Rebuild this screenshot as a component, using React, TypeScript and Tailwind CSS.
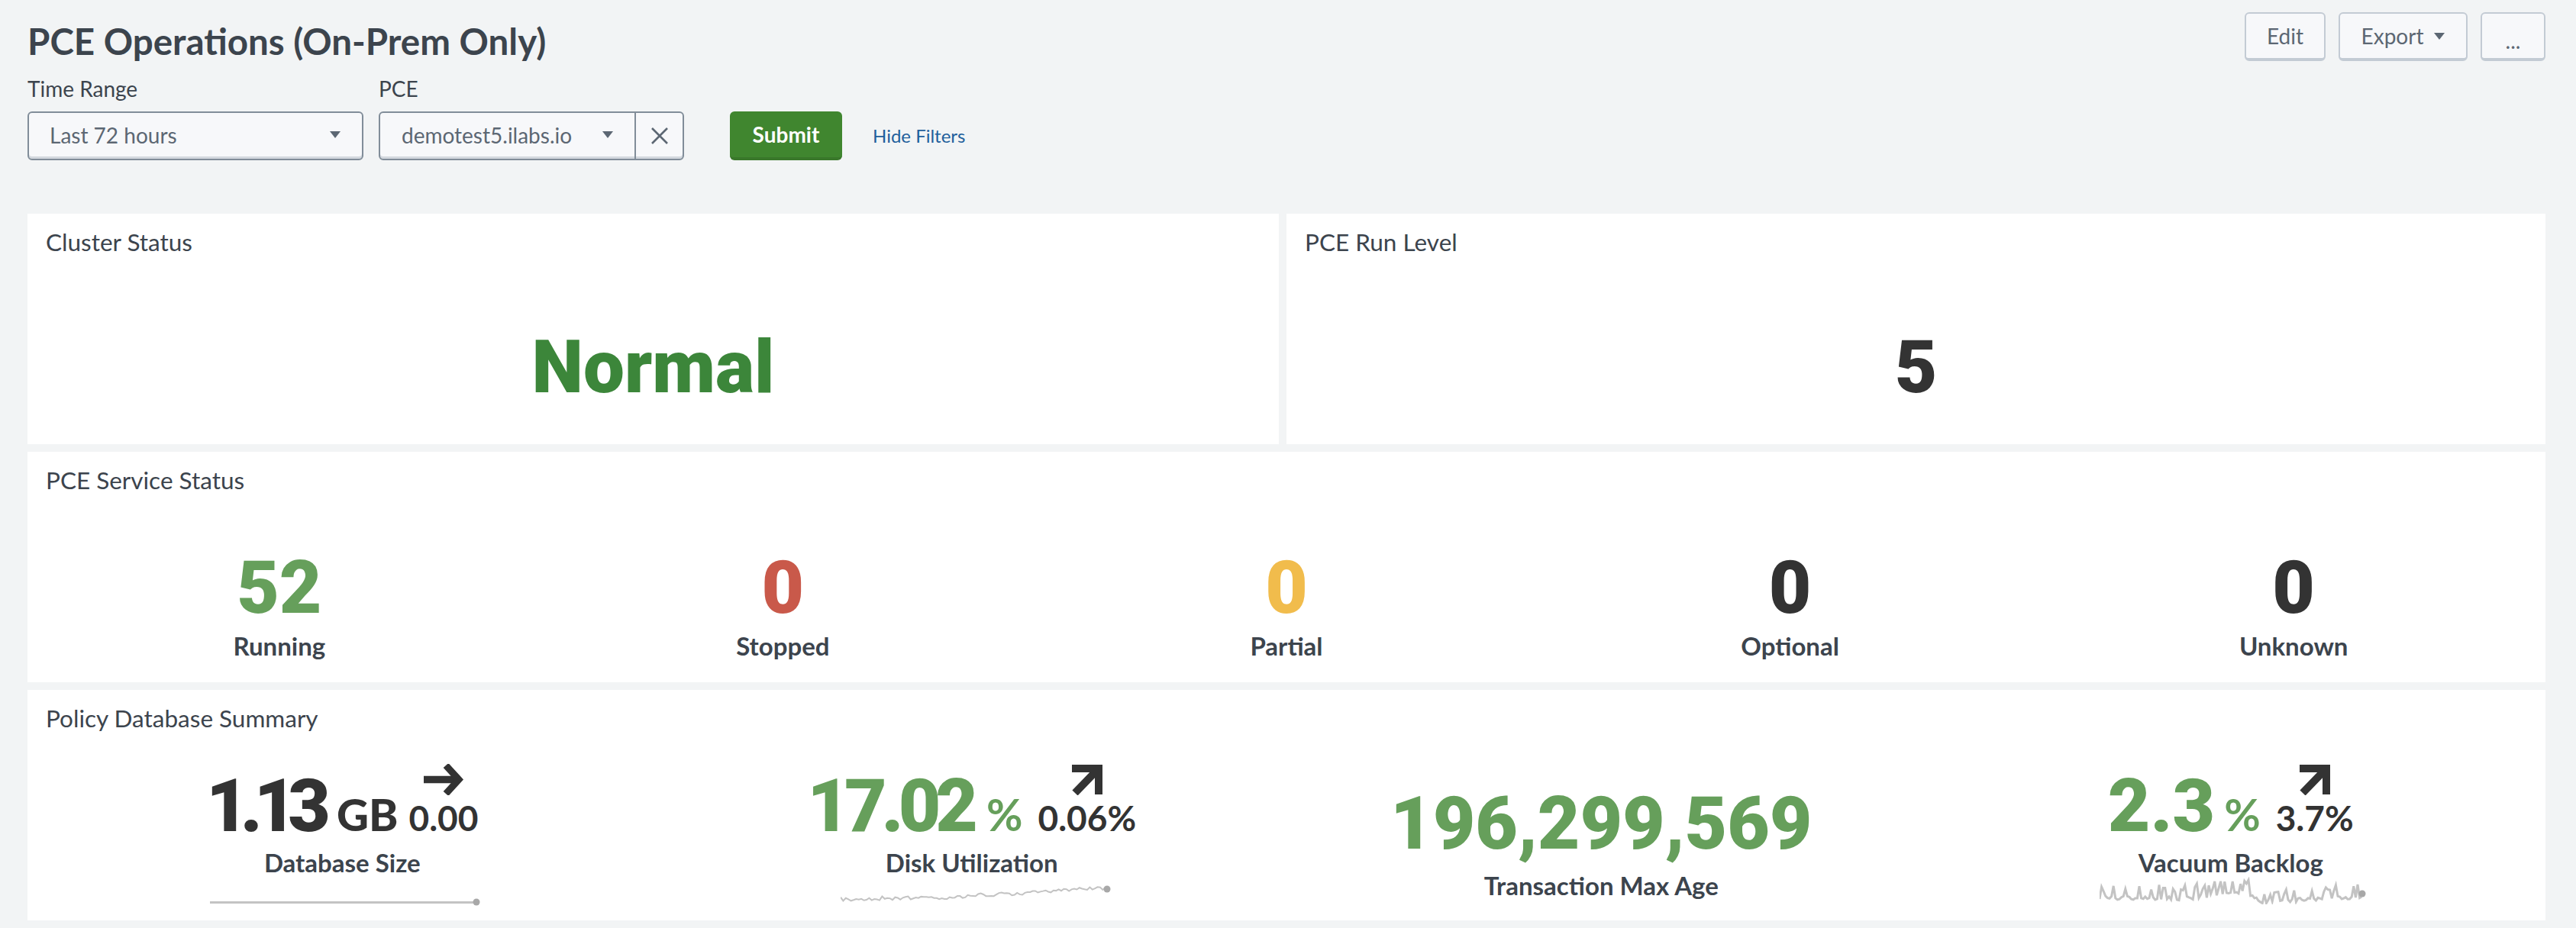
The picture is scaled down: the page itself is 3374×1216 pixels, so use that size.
import React from "react";

function rng(seed: number) {
  let s = seed;
  return () => {
    s = (s * 16807) % 2147483647;
    return (s - 1) / 2147483646;
  };
}

function noisyPath(
  width: number,
  env: (t: number) => number,
  amp: number,
  step: number,
  seed: number,
  spiky: boolean
) {
  const r = rng(seed);
  const pts: string[] = [];
  for (let x = 0; x <= width; x += step) {
    const t = x / width;
    const n = r();
    const d = spiky ? (n > 0.62 ? -amp * (0.5 + r()) : amp * r() * 0.5) : (n - 0.5) * amp;
    pts.push(`${x.toFixed(1)},${(env(t) + d).toFixed(1)}`);
  }
  return "M" + pts.join("L");
}

const diskPath = noisyPath(
  349,
  (t) => (t < 0.4 ? 18 - t * 6 : 15.6 - (t - 0.4) * 20),
  5,
  3.4,
  4242,
  false
);
const vacPath = noisyPath(
  344,
  (t) =>
    t < 0.28
      ? 25
      : t < 0.3
        ? 29
        : t < 0.57
          ? 27 - ((t - 0.3) / 0.27) * 12
          : t < 0.6
            ? 24
            : 30 - ((t - 0.6) / 0.4) * 6,
  10,
  2.6,
  987,
  true
);

const BIG = "font-['Roboto',sans-serif] text-[96px] font-black leading-[96px]";

function Caret() {
  return (
    <svg width="14" height="9" viewBox="0 0 14 9" className="shrink-0">
      <path d="M0 0H14L7 9Z" fill="#5c6773" />
    </svg>
  );
}

function ArrowRight() {
  return (
    <svg width="52" height="41" viewBox="0 0 52 41" className="block mx-auto">
      <path d="M0 20.5H44" stroke="#333" strokeWidth="9.5" fill="none" />
      <path d="M29 2L46 20.5L29 39" stroke="#333" strokeWidth="9" fill="none" strokeMiterlimit="4" />
    </svg>
  );
}

function ArrowUp() {
  return (
    <svg width="42" height="40" viewBox="0 0 42 40" className="block mx-auto">
      <path d="M1 5H36V39" stroke="#333" strokeWidth="10" fill="none" />
      <path d="M35 6L5 37" stroke="#333" strokeWidth="10" fill="none" />
    </svg>
  );
}

function Panel({ title, className, children }: { title: string; className?: string; children: React.ReactNode }) {
  return (
    <div className={"bg-white h-[302px] flex flex-col " + (className ?? "")}>
      <div className="pl-[24px] h-[78px] pt-[19px] text-[31.5px] leading-[36px] text-[#3c444d]">{title}</div>
      {children}
    </div>
  );
}

function Stat({ value, label, color }: { value: string; label: string; color: string }) {
  return (
    <div className="flex flex-col items-center">
      <div className={BIG + " " + color}>{value}</div>
      <div className="text-[33px] font-bold leading-[38px] text-[#3c444d] mt-[9px]">{label}</div>
    </div>
  );
}

function Delta({ up, text }: { up: boolean; text: string }) {
  return (
    <div className="text-[46px] font-bold leading-[44px] text-[#333] text-center ml-[20px]">
      {up ? <ArrowUp /> : <ArrowRight />}
      <div className="mt-[8px]">{text}</div>
    </div>
  );
}

function TopButton({ children, className }: { children: React.ReactNode; className?: string }) {
  return (
    <button
      className={
        "h-[64px] rounded-[6px] border-2 border-[#c3cbd4] border-b-[4px] bg-[#f7f8fa] text-[28px] text-[#5c6773] flex items-center justify-center " +
        (className ?? "")
      }
    >
      {children}
    </button>
  );
}

export default function App() {
  return (
    <div
      className="min-h-[1216px] bg-[#f2f4f5] pl-[36px] pr-[40px] flex flex-col"
      style={{ fontFamily: "Lato, 'Noto Sans', sans-serif" }}
    >
      <div className="flex justify-between pt-[16px] h-[96px]">
        <h1 className="text-[47.5px] leading-[56px] font-bold text-[#3c444d] mt-[10px]">PCE Operations (On-Prem Only)</h1>
        <div className="flex gap-[17px]">
          <TopButton className="w-[106px]">Edit</TopButton>
          <TopButton className="w-[169px] gap-[14px]">
            Export
            <Caret />
          </TopButton>
          <TopButton className="w-[85px] pt-[12px]">...</TopButton>
        </div>
      </div>

      <div className="flex items-start">
        <div className="w-[440px] mr-[20px]">
          <div className="text-[28px] leading-[40px] text-[#3c444d] mb-[10px]">Time Range</div>
          <div className="h-[64px] rounded-[6px] border-2 border-[#818d99] bg-[#f7f8fa] shadow-[inset_0_-3px_0_#d3d8de] flex items-center justify-between pl-[27px] pr-[28px] pb-[3px] text-[28px] text-[#5c6773]">
            <span>Last 72 hours</span>
            <Caret />
          </div>
        </div>
        <div className="w-[400px] mr-[60px]">
          <div className="text-[28px] leading-[40px] text-[#3c444d] mb-[10px]">PCE</div>
          <div className="h-[64px] rounded-[6px] border-2 border-[#818d99] bg-[#f7f8fa] shadow-[inset_0_-3px_0_#d3d8de] flex items-stretch text-[28px] text-[#5c6773]">
            <div className="w-[335px] border-r-2 border-[#818d99] flex items-center justify-between pl-[28px] pr-[28px] pb-[3px]">
              <span>demotest5.ilabs.io</span>
              <Caret />
            </div>
            <div className="flex-1 flex items-center justify-center">
              <svg width="22" height="22" viewBox="0 0 22 22">
                <path d="M1 1L21 21M21 1L1 21" stroke="#5c6773" strokeWidth="2.6" fill="none" />
              </svg>
            </div>
          </div>
        </div>
        <button className="mt-[50px] w-[147px] h-[64px] rounded-[6px] bg-[#40862f] border-b-[4px] border-[#39772a] text-white font-bold text-[28px]">
          Submit
        </button>
        <a className="mt-[50px] ml-[40px] h-[64px] flex items-center text-[24px] text-[#1f5f9c]">Hide Filters</a>
      </div>

      <div className="mt-[70px] flex flex-col gap-[10px]">
        <div className="grid grid-cols-[1639px_1649px] gap-[10px]">
          <Panel title="Cluster Status">
            <div className={BIG + " text-center text-[#3c863a] mt-[75px]"}>Normal</div>
          </Panel>
          <Panel title="PCE Run Level">
            <div className={BIG + " text-center text-[#333] mt-[75px]"}>5</div>
          </Panel>
        </div>

        <Panel title="PCE Service Status">
          <div className="grid grid-cols-5 mt-[52px]">
            <Stat value="52" label="Running" color="text-[#669f5b]" />
            <Stat value="0" label="Stopped" color="text-[#c9594a]" />
            <Stat value="0" label="Partial" color="text-[#f1bc4c]" />
            <Stat value="0" label="Optional" color="text-[#333]" />
            <Stat value="0" label="Unknown" color="text-[#333]" />
          </div>
        </Panel>

        <Panel title="Policy Database Summary">
          <div className="grid grid-cols-4 mt-[6px]">
            <div className="flex flex-col items-center">
              <div className="flex items-baseline h-[112px] text-[#333]">
                <span className={BIG + " mt-[20px] tracking-[-11px]"}>1.13</span>
                <span className="text-[58px] font-black leading-[58px] ml-[19px] -mr-[6px]">GB</span>
                <Delta up={false} text="0.00" />
              </div>
              <div className="text-[33px] font-bold leading-[38px] text-[#3c444d] mt-[11px]">Database Size</div>
              <svg width="354" height="14" viewBox="0 0 354 14" className="mt-[26px] ml-[8px]">
                <path d="M0 7.5H349" stroke="#c3c3c3" strokeWidth="3" fill="none" />
                <ellipse cx="349" cy="7" rx="4.5" ry="4.5" fill="#a8a8a8" />
              </svg>
            </div>
            <div className="flex flex-col items-center">
              <div className="flex items-baseline h-[112px] text-[#669f5b]">
                <span className={BIG + " mt-[20px] tracking-[-7px]"}>17.02</span>
                <span className="text-[58px] font-bold leading-[58px] ml-[18px]">%</span>
                <Delta up text="0.06%" />
              </div>
              <div className="text-[33px] font-bold leading-[38px] text-[#3c444d] mt-[11px]">Disk Utilization</div>
              <svg width="354" height="30" viewBox="0 0 354 30" className="mt-[11px] ml-[10px]">
                <path d={diskPath} stroke="#c3c3c3" strokeWidth="2" fill="none" />
                <circle cx="349" cy="5" r="4.5" fill="#a8a8a8" />
              </svg>
            </div>
            <div className="flex flex-col items-center">
              <div className={BIG + " text-[#669f5b] mt-[43px]"}>196,299,569</div>
              <div className="text-[33px] font-bold leading-[38px] text-[#3c444d] mt-[14px]">Transaction Max Age</div>
            </div>
            <div className="flex flex-col items-center">
              <div className="flex items-baseline h-[112px] text-[#669f5b]">
                <span className={BIG + " mt-[20px]"}>2.3</span>
                <span className="text-[58px] font-bold leading-[58px] ml-[12px]">%</span>
                <Delta up text="3.7%" />
              </div>
              <div className="text-[33px] font-bold leading-[38px] text-[#3c444d] mt-[11px]">Vacuum Backlog</div>
              <svg width="350" height="36" viewBox="0 0 350 36" className="ml-[6px]">
                <path d={vacPath} stroke="#c3c3c3" strokeWidth="3" fill="none" />
                <circle cx="344" cy="22" r="4.5" fill="#a8a8a8" />
              </svg>
            </div>
          </div>
        </Panel>
      </div>
    </div>
  );
}
